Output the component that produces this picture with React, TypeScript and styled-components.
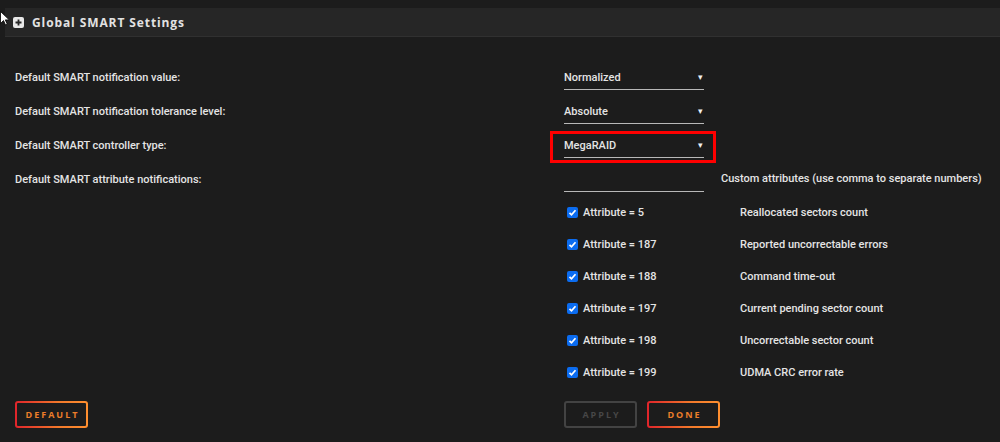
import styled, { createGlobalStyle } from 'styled-components';

const GlobalStyle = createGlobalStyle`
  html, body {
    margin: 0;
    padding: 0;
    background: #1c1c1c;
  }
  body {
    font-family: Roboto, 'Noto Sans', sans-serif;
    color: #e4e4e4;
  }
`;

const Page = styled.div`
  position: relative;
  width: 1000px;
  height: 442px;
  overflow: hidden;
  padding-top: 8px;
  box-sizing: border-box;
`;

const Cursor = styled.svg`
  position: absolute;
  left: 0;
  top: 11px;
`;

const Header = styled.div`
  margin-left: 5px;
  height: 28px;
  background: #262626;
  border-bottom: 1px solid #303030;
  display: flex;
  align-items: center;
  gap: 8px;
  padding-left: 8px;
`;

const Title = styled.span`
  font-family: 'Open Sans', Roboto, sans-serif;
  font-size: 12px;
  font-weight: 700;
  letter-spacing: 0.9px;
  color: #e2e2e2;
`;

const Content = styled.div`
  padding: 23px 15px 0 15px;
`;

const FieldRow = styled.div`
  display: grid;
  grid-template-columns: 549px 1fr;
  align-items: center;
  height: 34px;
  font-size: 11px;
  font-weight: 500;
`;

const Label = styled.div`
  color: #e4e4e4;
`;

const Field = styled.div`
  display: flex;
  align-items: center;
  gap: 17px;
`;

const Select = styled.div<{ $highlight?: boolean }>`
  position: relative;
  width: 140px;
  height: 25px;
  box-sizing: border-box;
  border-bottom: 1px solid #b8b8b8;
  display: flex;
  align-items: center;
  justify-content: space-between;
  padding-top: 1px;
  color: #e4e4e4;
  &::after {
    content: '';
    display: ${(p) => (p.$highlight ? 'block' : 'none')};
    position: absolute;
    left: -14px;
    right: -12px;
    top: -2px;
    bottom: -6px;
    border: 3px solid #ff0000;
  }
`;

const Arrow = styled.span`
  font-size: 9px;
  margin-right: 1px;
  color: #f0f0f0;
`;

const TextInput = styled.div`
  width: 140px;
  height: 26px;
  box-sizing: border-box;
  border-bottom: 1px solid #b8b8b8;
`;

const Hint = styled.span`
  color: #e4e4e4;
  white-space: nowrap;
  margin-top: -1px;
`;

const CheckList = styled.div`
  margin-left: 549px;
`;

const CheckRow = styled.div`
  display: grid;
  grid-template-columns: 176px 1fr;
  align-items: center;
  height: 32px;
  font-size: 11px;
  font-weight: 500;
`;

const CheckLabel = styled.label`
  display: flex;
  align-items: center;
  gap: 5px;
  padding-left: 3px;
`;

const Box = styled.span`
  width: 11px;
  height: 11px;
  border-radius: 2px;
  background: #0b6cf0;
  display: flex;
  align-items: center;
  justify-content: center;
`;

const Footer = styled.div`
  display: grid;
  grid-template-columns: 549px 1fr;
  margin-top: 13px;
`;

const ButtonGroup = styled.div`
  display: flex;
  gap: 10px;
`;

const Button = styled.button<{ $disabled?: boolean }>`
  width: 73px;
  height: 27px;
  border-radius: 3px;
  border: 2px solid transparent;
  background: ${(p) =>
    p.$disabled
      ? 'linear-gradient(#1c1c1c, #1c1c1c) padding-box, linear-gradient(#434343, #434343) border-box'
      : 'linear-gradient(#1c1c1c, #1c1c1c) padding-box, linear-gradient(90deg, #e0242b, #f2792b 60%, #ff8f2f) border-box'};
  color: ${(p) => (p.$disabled ? '#474747' : '#ec7e2a')};
  font-family: 'Open Sans', Roboto, sans-serif;
  font-size: 9px;
  font-weight: 700;
  letter-spacing: 2px;
  padding: 0 0 0 2px;
  cursor: pointer;
`;

const settings = [
  { label: 'Default SMART notification value:', value: 'Normalized' },
  { label: 'Default SMART notification tolerance level:', value: 'Absolute' },
  { label: 'Default SMART controller type:', value: 'MegaRAID', highlight: true },
];

const attributes = [
  { id: 5, name: 'Reallocated sectors count' },
  { id: 187, name: 'Reported uncorrectable errors' },
  { id: 188, name: 'Command time-out' },
  { id: 197, name: 'Current pending sector count' },
  { id: 198, name: 'Uncorrectable sector count' },
  { id: 199, name: 'UDMA CRC error rate' },
];

const PlusSquare = () => (
  <svg width="11" height="11" viewBox="0 0 11 11">
    <rect x="0" y="0" width="11" height="11" rx="2" fill="#e8e8e8" />
    <path d="M5.5 2.5v6M2.5 5.5h6" stroke="#262626" strokeWidth="1.8" />
  </svg>
);

const Check = () => (
  <svg width="9" height="9" viewBox="0 0 9 9">
    <path d="M1.5 4.8l2 2 4-4.6" fill="none" stroke="#fff" strokeWidth="1.7" />
  </svg>
);

export default function App() {
  return (
    <Page>
      <GlobalStyle />
      <Header>
        <PlusSquare />
        <Title>Global SMART Settings</Title>
      </Header>
      <Content>
        {settings.map((s) => (
          <FieldRow key={s.label}>
            <Label>{s.label}</Label>
            <Field>
              <Select $highlight={s.highlight}>
                {s.value}
                <Arrow>▾</Arrow>
              </Select>
            </Field>
          </FieldRow>
        ))}
        <FieldRow>
          <Label>Default SMART attribute notifications:</Label>
          <Field>
            <TextInput />
            <Hint>Custom attributes (use comma to separate numbers)</Hint>
          </Field>
        </FieldRow>
        <CheckList>
          {attributes.map((a) => (
            <CheckRow key={a.id}>
              <CheckLabel>
                <Box>
                  <Check />
                </Box>
                Attribute = {a.id}
              </CheckLabel>
              <span>{a.name}</span>
            </CheckRow>
          ))}
        </CheckList>
        <Footer>
          <div>
            <Button>DEFAULT</Button>
          </div>
          <ButtonGroup>
            <Button $disabled>APPLY</Button>
            <Button>DONE</Button>
          </ButtonGroup>
        </Footer>
      </Content>
      <Cursor width="9" height="15" viewBox="0 0 9 15">
        <path d="M0.5 0.5v12l3-3 2 4.5 1.8-.8-2-4.3h4z" fill="#fff" stroke="#000" strokeWidth="0.8" />
      </Cursor>
    </Page>
  );
}
